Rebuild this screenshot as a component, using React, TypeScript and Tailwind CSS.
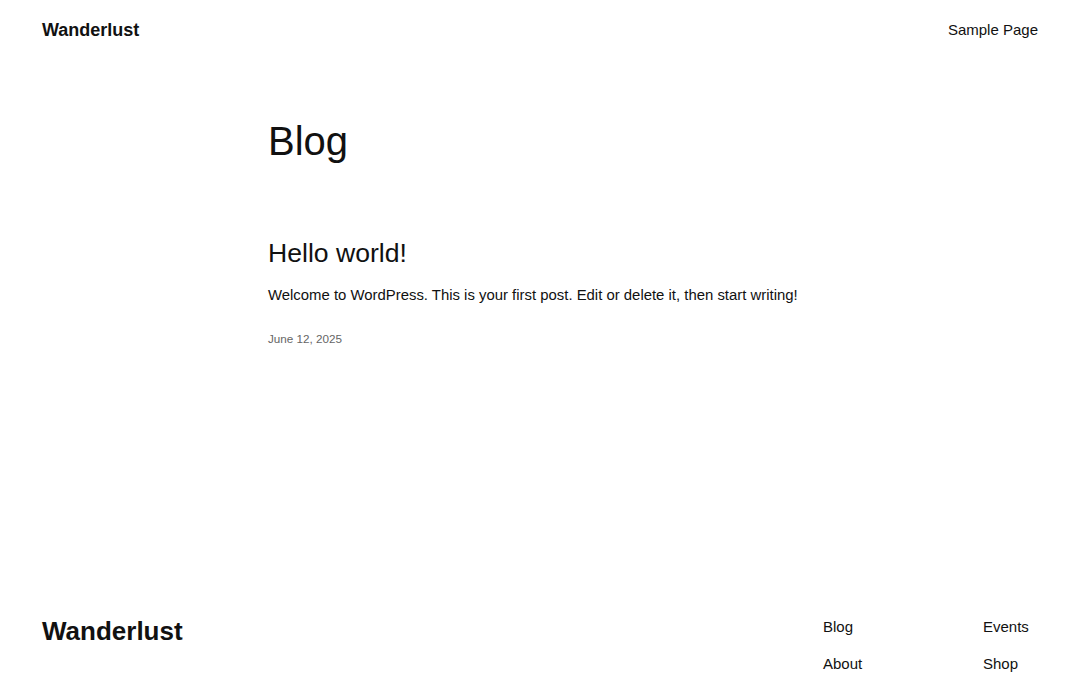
export default function App() {
  return (
    <div className="min-h-screen bg-white text-[#111111] font-['Liberation_Sans',Arial,sans-serif]">
      {/* Header */}
      <header className="flex h-[58px] items-center justify-between px-[42px] pt-[2px]">
        <a href="#" className="text-[18px] font-bold leading-none">
          Wanderlust
        </a>
        <nav>
          <a href="#" className="text-[15px] leading-none">
            Sample Page
          </a>
        </nav>
      </header>

      {/* Main */}
      <main className="pl-[268px] pr-[42px] pt-[59px]">
        <h1 className="text-[40px] font-normal leading-[48px]">Blog</h1>

        <article className="mt-[72px] max-w-[645px]">
          <h2 className="text-[26.6px] font-normal leading-[32px]">
            Hello world!
          </h2>
          <p className="mt-[14px] text-[14.9px] leading-[24px]">
            Welcome to WordPress. This is your first post. Edit or delete it, then start writing!
          </p>
          <div className="mt-[23px] text-[11.7px] leading-[18px] text-[#666666]">
            June 12, 2025
          </div>
        </article>
      </main>

      {/* Footer */}
      <footer className="mt-[268px] flex items-start justify-between px-[42px]">
        <a href="#" className="text-[26px] font-bold leading-[31px]">
          Wanderlust
        </a>
        <div className="grid grid-cols-[160px_55px] gap-y-[15px] text-[15px] leading-[22px]">
          <a href="#">Blog</a>
          <a href="#">Events</a>
          <a href="#">About</a>
          <a href="#">Shop</a>
        </div>
      </footer>
    </div>
  );
}
